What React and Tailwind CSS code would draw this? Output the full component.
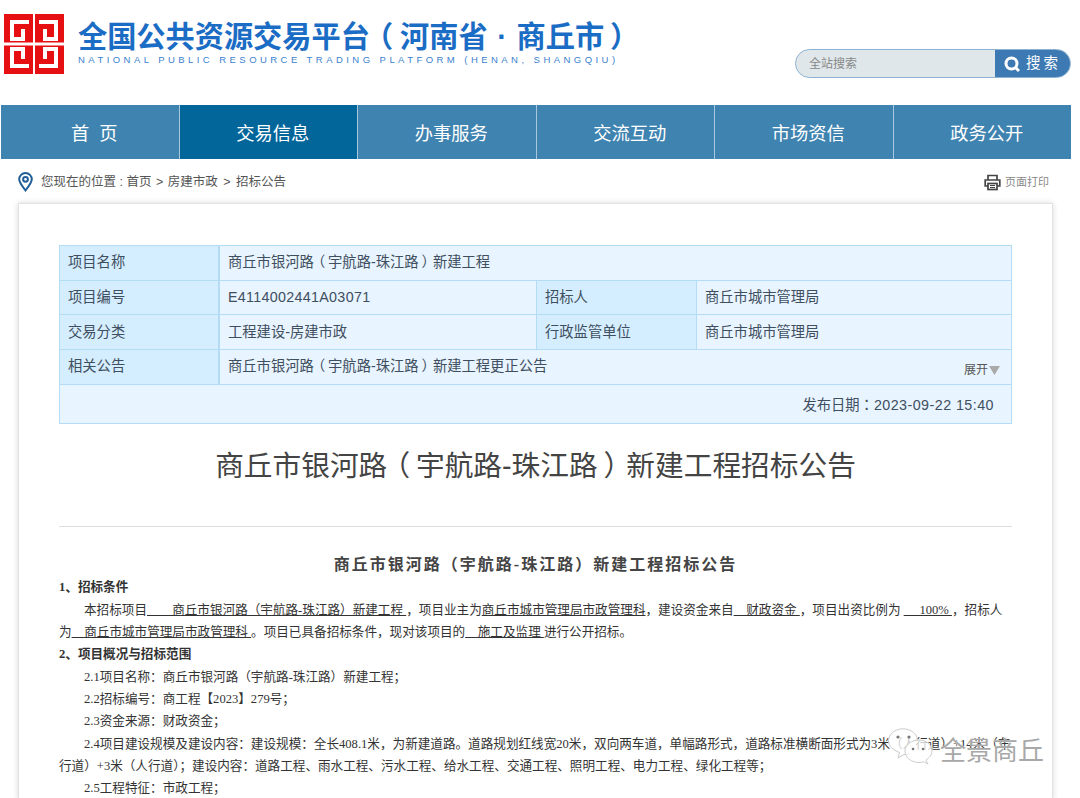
import React from 'react';

const cjk = '"Liberation Sans","Noto Sans CJK SC",sans-serif';
const tcFont = '"Noto Sans CJK TC",sans-serif';

function Mid({ children }) {
  return <span style={{ fontFamily: tcFont }}>{children}</span>;
}
function Lb() {
  return <span className="inline-block translate-x-[-0.2em]">（</span>;
}
function Rb() {
  return <span className="inline-block translate-x-[0.2em]">）</span>;
}

function Road({ suffix }) {
  return <>商丘市银河路<Lb />宇航路-珠江路<Rb />{suffix}</>;
}

function Quad({ t }) {
  return (
    <g transform={t}>
      <rect x="0" y="0" width="29" height="28.500" fill="#e60f12" />
      <path d="M25 8H8V25H19V15" fill="none" stroke="#fff" strokeWidth="4" />
    </g>
  );
}

function Logo() {
  return (
    <svg width="60" height="60" viewBox="0 0 60 60" className="mt-px shrink-0">
      <Quad t="" />
      <Quad t="translate(60 0) scale(-1 1)" />
      <Quad t="translate(0 60) scale(1 -1)" />
      <Quad t="translate(60 60) scale(-1 -1)" />
    </svg>
  );
}

const navs = ['首  页', '交易信息', '办事服务', '交流互动', '市场资信', '政务公开'];

function Cell({ children, className = '' }) {
  return <div className={`flex items-center px-[8px] ${className}`}>{children}</div>;
}

export default function App() {
  return (
    <div className="relative h-[798px] w-[1080px] overflow-hidden bg-white" style={{ fontFamily: cjk }}>
      <header className="flex h-[105px] w-[1071px] items-start pl-1 pt-[13px]">
        <Logo />
        <div className="ml-[14px] mt-[8px] w-[620px]">
          <div className="text-[29.2px] font-bold leading-[32px] whitespace-pre text-[#1a6cc4]">全国公共资源交易平台<Lb /><span className="ml-[1px] [word-spacing:1.5px]">河南省 · 商丘市</span><Rb /></div>
          <div className="mt-[1px] text-[9.5px] font-medium leading-[12px] tracking-[3.45px] whitespace-nowrap text-[#3b82cf]">NATIONAL PUBLIC RESOURCE TRADING PLATFORM (HENAN, SHANGQIU)</div>
        </div>
        <div className="ml-auto mt-[36px] flex h-[29px] w-[276px] overflow-hidden rounded-full border border-[#8fb2d3] bg-[#dfe7ea]">
          <div className="flex flex-1 items-center pl-[13px] text-[12px] text-[#888]">全站搜索</div>
          <div className="flex w-[75px] items-center justify-center gap-[6px] bg-[#3d7ab3] text-[14.500px] tracking-[3px] text-white">
            <svg width="16" height="16" viewBox="0 0 16 16" fill="none" stroke="#fff" strokeWidth="3"><circle cx="7.500" cy="7.500" r="5.500" /><path d="M11.500 11.500L15 15" /></svg>
            搜索
          </div>
        </div>
      </header>

      <nav className="ml-[1px] flex h-[54px] w-[1070px] gap-[1px] bg-[#a9c8de] text-[18.300px] text-white">
        {navs.map((n, i) => (
          <div key={n} className={`flex flex-1 items-center justify-center whitespace-pre pl-[9px] pt-[3px] ${i === 1 ? 'bg-[#03669b]' : 'bg-[#3f83b0]'}`}>{n}</div>
        ))}
      </nav>

      <div className="flex h-[44px] w-[1071px] items-center pl-[18px] pr-[22px] pt-[2px] text-[12.500px] text-[#555]">
        <svg width="15" height="20" viewBox="0 0 15 20" fill="none" stroke="#1f5e97" strokeWidth="2"><path d="M7.500 18.500C3.500 13.500 1.200 10.500 1.200 7.300a6.300 6.300 0 0 1 12.600 0c0 3.200-2.300 6.200-6.300 11.200z" /><circle cx="7.500" cy="7.300" r="2.400" /></svg>
        <span className="ml-[8px] whitespace-pre">您现在的位置 : 首页 <span className="mx-[1px]">&gt;</span> 房建市政 <span className="mx-[2px]">&gt;</span> 招标公告</span>
        <div className="ml-auto flex items-center gap-[4px] text-[11px] text-[#888]">
          <svg width="17" height="17" viewBox="0 0 17 17" fill="none" stroke="#444" strokeWidth="1.700"><path d="M4 6V1.500h9V6" /><path d="M4 12H1.200V6h14.600v6H13" /><rect x="4" y="9.500" width="9" height="6" /><path d="M6 11.500h5M6 13.500h5" strokeWidth="1" /></svg>
          页面打印
        </div>
      </div>

      <main className="ml-[18px] w-[1035px] border border-[#e2e2e2] px-[40px] pt-[41px] shadow-[0_0_6px_rgba(0,0,0,0.15)]">
        <div className="border border-[#b5dcf5] bg-[#e8f4ff] text-[14.300px] text-[#3f4f60]">
          <div className="flex h-[34.700px] border-b border-[#b5dcf5]">
            <Cell className="w-[160px] border-r-2 border-[#b5dcf5] bg-[#d4edff]">项目名称</Cell>
            <Cell className="flex-1"><span><Road suffix="新建工程" /></span></Cell>
          </div>
          <div className="flex h-[34.700px] border-b border-[#b5dcf5]">
            <Cell className="w-[160px] border-r-2 border-[#b5dcf5] bg-[#d4edff]">项目编号</Cell>
            <Cell className="w-[317px] border-r border-[#b5dcf5] tracking-[0.3px]">E4114002441A03071</Cell>
            <Cell className="w-[160px] border-r border-[#b5dcf5] bg-[#d4edff]">招标人</Cell>
            <Cell className="flex-1">商丘市城市管理局</Cell>
          </div>
          <div className="flex h-[34.700px] border-b border-[#b5dcf5]">
            <Cell className="w-[160px] border-r-2 border-[#b5dcf5] bg-[#d4edff]">交易分类</Cell>
            <Cell className="w-[317px] border-r border-[#b5dcf5]">工程建设-房建市政</Cell>
            <Cell className="w-[160px] border-r border-[#b5dcf5] bg-[#d4edff]">行政监管单位</Cell>
            <Cell className="flex-1">商丘市城市管理局</Cell>
          </div>
          <div className="flex h-[34.700px] border-b border-[#b5dcf5]">
            <Cell className="w-[160px] border-r-2 border-[#b5dcf5] bg-[#d4edff]">相关公告</Cell>
            <Cell className="flex-1"><span><Road suffix="新建工程更正公告" /></span></Cell>
            <div className="flex items-end gap-[1px] pb-[6px] pr-[11px] text-[12px] leading-[16px] text-[#555]">
              展开
              <svg width="11" height="9" viewBox="0 0 11 9" className="mb-[3px]"><path d="M0 0h11L5.500 9z" fill="#aaa" /></svg>
            </div>
          </div>
          <div className="flex h-[38.200px] items-center justify-end pr-[17px] pt-[2px]"><span>发布日期<Mid>：</Mid><span className="tracking-[0.45px]">2023-09-22 15:40</span></span></div>
        </div>

        <h1 className="mt-[20.500px] text-center text-[28.700px] leading-[44px] font-normal text-[#444]"><Road suffix="新建工程招标公告" /></h1>
        <div className="mt-[38px] border-t border-[#ddd]" />

        <article className="text-[12.600px] leading-[22.300px] text-[#333]" style={{ fontFamily: '"Liberation Serif","Noto Sans CJK SC",serif' }}>
          <h2 className="mt-[26px] text-center text-[16px] font-bold leading-[23px] tracking-[2px] text-[#444]">商丘市银河路（宇航路-珠江路）新建工程招标公告</h2>
          <p className="font-bold">1、招标条件</p>
          <p className="indent-[25px] whitespace-nowrap">本招标项目<u>　　商丘市银河路（宇航路-珠江路）新建工程 </u> ，项目业主为<u>商丘市城市管理局市政管理科</u>，建设资金来自<u>　财政资金 </u>，项目出资比例为 <u>　 100% </u>，招标人</p>
          <p className="whitespace-nowrap">为<u>　商丘市城市管理局市政管理科 </u>。项目已具备招标条件，现对该项目的<u>　施工及监理 </u>进行公开招标。</p>
          <p className="font-bold">2、项目概况与招标范围</p>
          <p className="indent-[25px]">2.1项目名称：商丘市银河路（宇航路-珠江路）新建工程；</p>
          <p className="indent-[25px]">2.2招标编号：商工程【2023】279号；</p>
          <p className="indent-[25px]">2.3资金来源：财政资金；</p>
          <p className="indent-[25px] whitespace-nowrap">2.4项目建设规模及建设内容：建设规模：全长408.1米，为新建道路。道路规划红线宽20米，双向两车道，单幅路形式，道路标准横断面形式为3米（人行道）+14米（车</p>
          <p className="whitespace-nowrap">行道）+3米（人行道）；建设内容：道路工程、雨水工程、污水工程、给水工程、交通工程、照明工程、电力工程、绿化工程等；</p>
          <p className="indent-[25px]">2.5工程特征：市政工程；</p>
        </article>
      </main>

      <div className="absolute left-[888px] top-[728px] flex items-start text-[26px] leading-[40px] text-[#a8a8a8] [text-shadow:0_0_1px_#fff]">
        <svg width="46" height="40" viewBox="0 0 46 40" fill="rgba(255,255,255,0.75)" stroke="#ccc" strokeWidth="1">
          <path d="M22 26c-2 .6-4 .8-6 .5L10 30l1.500-5.500C5 22 .5 18 .5 13 .5 6 7 .8 15 .8S29.500 6 29.500 13" />
          <path d="M38 32c3-2.200 6-5 6-9 0-6.500-6-11-13-11s-14 4.500-14 11 6.500 11.500 14 11.500c1.800 0 3-.2 4.500-.7l4.500 2.200z" />
          <circle cx="10" cy="9" r="1.600" fill="#777" stroke="none" /><circle cx="21" cy="9" r="1.600" fill="#777" stroke="none" />
          <circle cx="25" cy="21" r="1.300" fill="#777" stroke="none" /><circle cx="35" cy="21" r="1.300" fill="#777" stroke="none" />
        </svg>
        <span className="ml-[6px] mt-[3px]">全景商丘</span>
      </div>
    </div>
  );
}
